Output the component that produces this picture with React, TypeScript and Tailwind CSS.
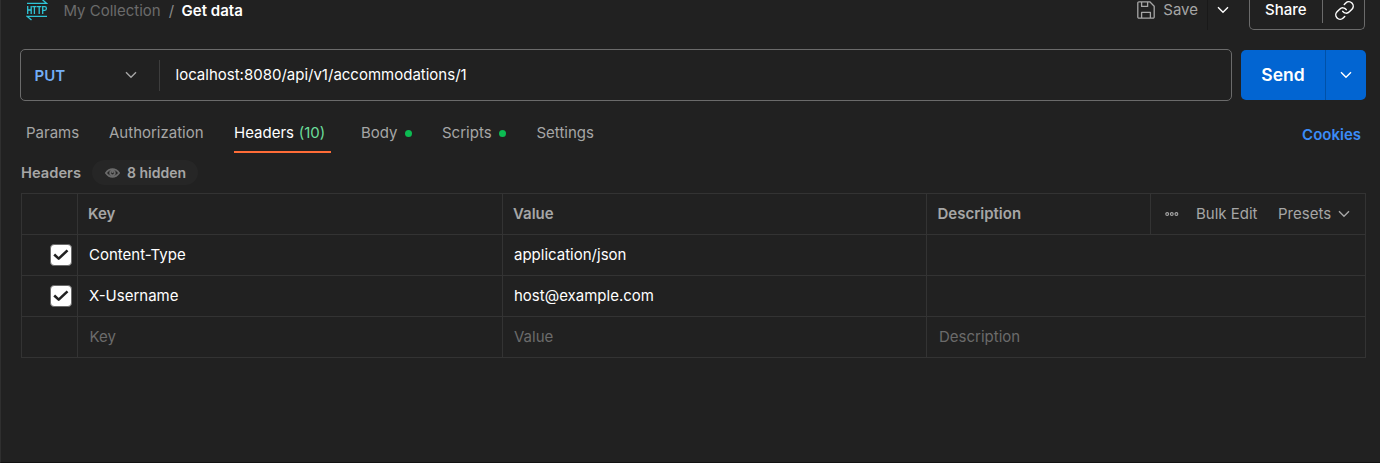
import React from "react";
import { Link } from "lucide-react";

type Row = { key: string; value: string };

const rows: Row[] = [
  { key: "Content-Type", value: "application/json" },
  { key: "X-Username", value: "host@example.com" },
];

function Chevron({ className = "" }: { className?: string }) {
  return (
    <svg width="12" height="8" viewBox="0 0 12 8" fill="none" stroke="currentColor" strokeWidth="1.4" className={className}>
      <path d="M1 1.2 L6 6.2 L11 1.2" />
    </svg>
  );
}

function HttpIcon() {
  return (
    <svg width="22" height="22" viewBox="0 0 22 22" fill="none" stroke="#2fc4d6" strokeWidth="1.3">
      <path d="M1 4.4H20.7L16.5 .8" />
      <path d="M21 17.4H1.3L5.5 21" />
      <path d="M1.7 7V15M5.2 7V15M1.7 11H5.2M6.2 7.6H10.6M8.4 7.6V15M11 7.6H15.4M13.2 7.6V15M16.7 15V7.6H18.8Q20.4 7.6 20.4 9.4T18.8 11.3H16.7" />
    </svg>
  );
}

function SaveIcon() {
  return (
    <svg width="18" height="18" viewBox="0 0 18 18" fill="none" stroke="currentColor" strokeWidth="1.3" strokeLinejoin="round">
      <path d="M2 .8H12.8L17.2 5.2V16A1.2 1.2 0 0 1 16 17.2H2A1.2 1.2 0 0 1 .8 16V2A1.2 1.2 0 0 1 2 .8Z" />
      <path d="M4.6 1V5.4H10.6V1M4.6 17V11.3H13.4V17" />
    </svg>
  );
}

function EyeIcon() {
  return (
    <svg width="15" height="10" viewBox="0 0 15 10" fill="none" stroke="#6b6b6b" strokeWidth="1.8">
      <path d="M.9 5Q3.6 1.2 7.5 1.2T14.1 5Q11.4 8.8 7.5 8.8T.9 5Z" />
      <circle cx="7.5" cy="5" r="2.3" />
      <path d="M7.5 5V3" />
    </svg>
  );
}

function Checkbox() {
  return (
    <span className="flex size-[22px] items-center justify-center rounded-[4px] border border-[#6b6b6b] bg-white">
      <svg width="16" height="12" viewBox="0 0 16 12" fill="none" stroke="#212121" strokeWidth="2.6" strokeLinejoin="round">
        <path d="M1.2 5.5 5.7 9.6 14.5 1.4" />
      </svg>
    </span>
  );
}

function Dot() {
  return <span className="size-[7px] rounded-full bg-[#0cbb52]" />;
}

const cell = "flex items-center border-l border-[#333333]";
const row = "grid h-[41px] grid-cols-[56px_425px_424px_439px] border-t border-[#333333]";

export default function App() {
  return (
    <div className="h-[463px] w-[1380px] overflow-hidden border-b border-l border-b-[#111111] border-l-[#2f2f2f] bg-[#212121] font-['Inter',sans-serif] text-[15px] leading-5 text-[#a6a6a6]">
      <header className="flex h-[30px] justify-between pr-[15px] pl-[25px]">
        <div className="-mt-[1px] flex h-[22px] items-center">
          <HttpIcon />
          <div className="flex pt-px">
            <span className="ml-[15.5px] text-[#6b6b6b]">My Collection</span>
            <span className="ml-[8px] text-[#8a8a8a]">/</span>
            <span className="ml-[7.5px] font-semibold text-white">Get data</span>
          </div>
        </div>
        <div className="flex">
          <div className="flex h-5 items-center">
            <SaveIcon />
            <span className="ml-2">Save</span>
          </div>
          <div className="ml-[9px] flex h-[30px] w-[42px] border-l border-[#191919] pt-[6px] pl-[9px] text-white">
            <Chevron />
          </div>
          <div className="flex h-[30px] w-[116px] rounded-b-[5px] border border-t-0 border-[#6b6b6b] text-white">
            <div className="flex h-5 w-[72px] items-center pl-[15px] font-medium">Share</div>
            <div className="flex h-[23px] flex-1 border-l border-[#6b6b6b] pl-[10.5px]">
              <Link size={21} strokeWidth={1.7} />
            </div>
          </div>
        </div>
      </header>

      <div className="mt-[19px] flex pl-[19px]">
        <div className="flex h-[52px] w-[1212px] items-center rounded-[5px] border border-[#6b6b6b]">
          <div className="flex h-[31px] w-[139px] items-center justify-between border-r border-[#3d3d3d] pr-[22px] pl-[13.5px]">
            <span className="pt-px font-semibold text-[#74aef6]">PUT</span>
            <Chevron />
          </div>
          <span className="ml-[15.5px] text-white">localhost:8080/api/v1/accommodations/1</span>
        </div>
        <div className="mt-px ml-[9px] flex h-[50px] w-[125px] overflow-hidden rounded-[5px] bg-[#0265d2] text-white">
          <div className="flex w-[84px] items-center justify-center text-[17.5px] font-semibold">Send</div>
          <div className="flex flex-1 items-center justify-center border-l border-[#0051a8]">
            <Chevron />
          </div>
        </div>
      </div>

      <nav className="flex h-[52px] items-start pt-[22px] pr-[19px] pl-[25px]">
        <span className="w-[83px]">Params</span>
        <span className="w-[125px]">Authorization</span>
        <span className="h-[30px] w-[97px] border-b-2 border-[#ff6c37] whitespace-nowrap text-white">
          Headers <span className="ml-[0.5px] text-[#6bdd9a]">(10)</span>
        </span>
        <span className="ml-[30px] flex w-[81px] items-center gap-[7px]">Body <Dot /></span>
        <span className="flex w-[94.5px] items-center gap-[7px]">Scripts <Dot /></span>
        <span>Settings</span>
        <span className="mt-[2px] ml-auto font-semibold text-[#3b8cf8]">Cookies</span>
      </nav>

      <div className="mt-[7px] flex h-[25px] items-center pl-5">
        <span className="w-[71px] text-[14.7px] font-semibold">Headers</span>
        <span className="flex h-[25px] w-[106px] items-center rounded-full bg-[#262626] pl-[13px] text-[14px] font-semibold">
          <EyeIcon />
          <span className="ml-[7px]">8 hidden</span>
        </span>
      </div>

      <div className="mt-2 ml-5 w-[1345px] border-r border-b border-[#333333]">
        <div className={row}>
          <div className={cell} />
          <div className={`${cell} pl-[10px] font-semibold`}>Key</div>
          <div className={`${cell} pl-[10px] font-semibold`}>Value</div>
          <div className={`${cell} justify-between pl-[10.5px]`}>
            <span className="font-semibold">Description</span>
            <div className="flex h-full w-[215px] items-center border-l border-[#333333] pl-[14px]">
              <svg width="14" height="5" viewBox="0 0 14 5" fill="none" stroke="currentColor" strokeWidth="1.1">
                <circle cx="2.2" cy="2" r="1.4" />
                <circle cx="6.8" cy="2" r="1.4" />
                <circle cx="11.4" cy="2" r="1.4" />
              </svg>
              <span className="ml-[17px] w-[82px]">Bulk Edit</span>
              <span>Presets</span>
              <Chevron className="ml-[7px]" />
            </div>
          </div>
        </div>
        {rows.map((r) => (
          <div key={r.key} className={`${row} text-white`}>
            <div className={`${cell} pl-[28px]`}><Checkbox /></div>
            <div className={`${cell} pl-[11px]`}>{r.key}</div>
            <div className={`${cell} pl-[11px]`}>{r.value}</div>
            <div className={cell} />
          </div>
        ))}
        <div className={`${row} text-[#6b6b6b]`}>
          <div className={cell} />
          <div className={`${cell} pl-[11.5px]`}>Key</div>
          <div className={`${cell} pl-[11px]`}>Value</div>
          <div className={`${cell} pl-[12px]`}>Description</div>
        </div>
      </div>
    </div>
  );
}
